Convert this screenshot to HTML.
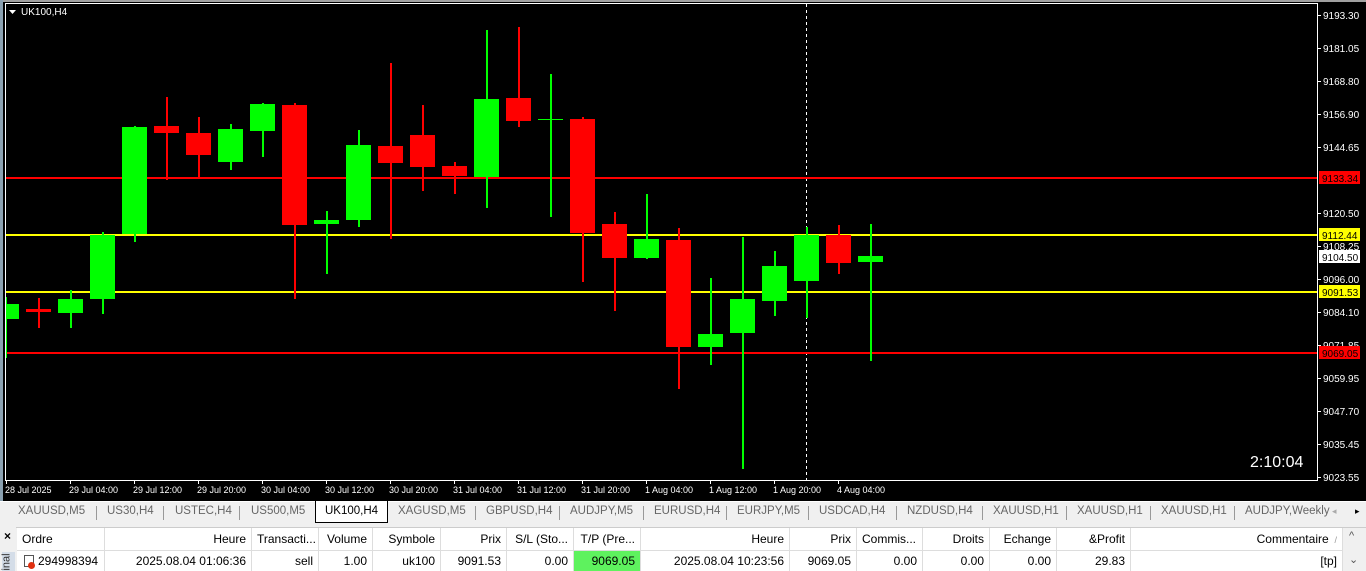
<!DOCTYPE html>
<html><head><meta charset="utf-8"><style>
*{margin:0;padding:0;box-sizing:border-box}
body{width:1366px;height:571px;overflow:hidden;background:#f0f0f0;font-family:"Liberation Sans",sans-serif;position:relative}
.a{position:absolute;white-space:nowrap}
.tab{position:absolute;top:505px;font-size:11.5px;color:#666}
.sep{position:absolute;top:506px;width:1px;height:14px;background:#999}
.h{position:absolute;top:528px;height:22px;font-size:12px;color:#000;line-height:22px;border-right:1px solid #ddd;padding:0 5px;text-align:right;background:#fff}
.r{position:absolute;top:551px;height:20px;font-size:12px;color:#000;line-height:20px;border-right:1px solid #ddd;padding:0 5px;text-align:right;background:#fff}
</style></head><body>
<svg class="a" style="left:0;top:0" width="1366" height="501" xmlns="http://www.w3.org/2000/svg" font-family="Liberation Sans, sans-serif">
<rect width="1366" height="501" fill="#000"/>
<rect x="0" y="0" width="1366" height="2" fill="#a0a0a0"/>
<rect x="0" y="0" width="3" height="501" fill="#8aa0b0"/>
<rect x="5" y="3" width="1313" height="1" fill="#fff"/>
<rect x="5" y="3" width="1" height="478" fill="#fff"/>
<rect x="1317" y="3" width="1" height="478" fill="#fff"/>
<rect x="5" y="480" width="1313" height="1" fill="#fff"/>
<path d="M9 10h7l-3.5 4z" fill="#fff"/>
<text x="21" y="15" font-size="10" fill="#fff">UK100,H4</text>
<line x1="806.5" y1="4" x2="806.5" y2="480" stroke="#fff" stroke-dasharray="3,3"/>
<g fill="#f00"><rect x="6" y="177" width="1311" height="2"/><rect x="6" y="352" width="1311" height="2"/></g>
<g fill="#ff0"><rect x="6" y="234" width="1311" height="2"/><rect x="6" y="291" width="1311" height="2"/></g>
<g font-size="10" fill="#fff">
<text x="1323" y="19">9193.30</text><text x="1323" y="52">9181.05</text><text x="1323" y="85">9168.80</text><text x="1323" y="118">9156.90</text><text x="1323" y="151">9144.65</text><text x="1323" y="217">9120.50</text><text x="1323" y="250">9108.25</text><text x="1323" y="283">9096.00</text><text x="1323" y="316">9084.10</text><text x="1323" y="349">9071.85</text><text x="1323" y="382">9059.95</text><text x="1323" y="415">9047.70</text><text x="1323" y="448">9035.45</text><text x="1323" y="481">9023.55</text>
</g>
<g fill="#fff"><rect x="1318" y="15" width="3" height="1"/><rect x="1318" y="48" width="3" height="1"/><rect x="1318" y="81" width="3" height="1"/><rect x="1318" y="114" width="3" height="1"/><rect x="1318" y="147" width="3" height="1"/><rect x="1318" y="213" width="3" height="1"/><rect x="1318" y="246" width="3" height="1"/><rect x="1318" y="279" width="3" height="1"/><rect x="1318" y="312" width="3" height="1"/><rect x="1318" y="345" width="3" height="1"/><rect x="1318" y="378" width="3" height="1"/><rect x="1318" y="411" width="3" height="1"/><rect x="1318" y="444" width="3" height="1"/><rect x="1318" y="477" width="3" height="1"/></g>
<rect x="1319" y="171" width="41" height="13" fill="#f00"/><text x="1322" y="182" font-size="10" fill="#000">9133.34</text>
<rect x="1319" y="228" width="41" height="13" fill="#ff0"/><text x="1322" y="239" font-size="10" fill="#000">9112.44</text>
<rect x="1319" y="250" width="41" height="13" fill="#fff"/><text x="1322" y="261" font-size="10" fill="#000">9104.50</text>
<rect x="1319" y="285" width="41" height="13" fill="#ff0"/><text x="1322" y="296" font-size="10" fill="#000">9091.53</text>
<rect x="1319" y="346" width="41" height="13" fill="#f00"/><text x="1322" y="357" font-size="10" fill="#000">9069.05</text>
<text x="1250" y="467" font-size="16" fill="#fff">2:10:04</text>
<g font-size="9" fill="#fff">
<text x="5" y="493">28 Jul 2025</text><text x="69" y="493">29 Jul 04:00</text><text x="133" y="493">29 Jul 12:00</text><text x="197" y="493">29 Jul 20:00</text><text x="261" y="493">30 Jul 04:00</text><text x="325" y="493">30 Jul 12:00</text><text x="389" y="493">30 Jul 20:00</text><text x="453" y="493">31 Jul 04:00</text><text x="517" y="493">31 Jul 12:00</text><text x="581" y="493">31 Jul 20:00</text><text x="645" y="493">1 Aug 04:00</text><text x="709" y="493">1 Aug 12:00</text><text x="773" y="493">1 Aug 20:00</text><text x="837" y="493">4 Aug 04:00</text>
</g>
<g fill="#fff"><rect x="6" y="481" width="1" height="3"/><rect x="70" y="481" width="1" height="3"/><rect x="134" y="481" width="1" height="3"/><rect x="198" y="481" width="1" height="3"/><rect x="262" y="481" width="1" height="3"/><rect x="326" y="481" width="1" height="3"/><rect x="390" y="481" width="1" height="3"/><rect x="454" y="481" width="1" height="3"/><rect x="518" y="481" width="1" height="3"/><rect x="582" y="481" width="1" height="3"/><rect x="646" y="481" width="1" height="3"/><rect x="710" y="481" width="1" height="3"/><rect x="774" y="481" width="1" height="3"/><rect x="838" y="481" width="1" height="3"/></g>
<g>
<rect x="6" y="297" width="1" height="61" fill="#0f0"/><rect x="6" y="304" width="13" height="15" fill="#0f0"/>
<rect x="38" y="298" width="2" height="30" fill="#f00"/><rect x="26" y="309" width="25" height="3" fill="#f00"/>
<rect x="70" y="290" width="2" height="38" fill="#0f0"/><rect x="58" y="299" width="25" height="14" fill="#0f0"/>
<rect x="102" y="232" width="2" height="82" fill="#0f0"/><rect x="90" y="235" width="25" height="64" fill="#0f0"/>
<rect x="134" y="126" width="2" height="116" fill="#0f0"/><rect x="122" y="127" width="25" height="107" fill="#0f0"/>
<rect x="166" y="97" width="2" height="83" fill="#f00"/><rect x="154" y="126" width="25" height="7" fill="#f00"/>
<rect x="198" y="117" width="2" height="60" fill="#f00"/><rect x="186" y="133" width="25" height="22" fill="#f00"/>
<rect x="230" y="124" width="2" height="46" fill="#0f0"/><rect x="218" y="129" width="25" height="33" fill="#0f0"/>
<rect x="262" y="103" width="2" height="54" fill="#0f0"/><rect x="250" y="104" width="25" height="27" fill="#0f0"/>
<rect x="294" y="103" width="2" height="196" fill="#f00"/><rect x="282" y="105" width="25" height="120" fill="#f00"/>
<rect x="326" y="211" width="2" height="63" fill="#0f0"/><rect x="314" y="220" width="25" height="4" fill="#0f0"/>
<rect x="358" y="130" width="2" height="97" fill="#0f0"/><rect x="346" y="145" width="25" height="75" fill="#0f0"/>
<rect x="390" y="63" width="2" height="176" fill="#f00"/><rect x="378" y="146" width="25" height="17" fill="#f00"/>
<rect x="422" y="105" width="2" height="86" fill="#f00"/><rect x="410" y="135" width="25" height="32" fill="#f00"/>
<rect x="454" y="162" width="2" height="32" fill="#f00"/><rect x="442" y="166" width="25" height="10" fill="#f00"/>
<rect x="486" y="30" width="2" height="178" fill="#0f0"/><rect x="474" y="99" width="25" height="78" fill="#0f0"/>
<rect x="518" y="27" width="2" height="100" fill="#f00"/><rect x="506" y="98" width="25" height="23" fill="#f00"/>
<rect x="550" y="74" width="2" height="143" fill="#0f0"/><rect x="538" y="119" width="25" height="1" fill="#0f0"/>
<rect x="582" y="117" width="2" height="165" fill="#f00"/><rect x="570" y="119" width="25" height="114" fill="#f00"/>
<rect x="614" y="212" width="2" height="99" fill="#f00"/><rect x="602" y="224" width="25" height="34" fill="#f00"/>
<rect x="646" y="194" width="2" height="65" fill="#0f0"/><rect x="634" y="239" width="25" height="19" fill="#0f0"/>
<rect x="678" y="228" width="2" height="161" fill="#f00"/><rect x="666" y="240" width="25" height="107" fill="#f00"/>
<rect x="710" y="278" width="2" height="87" fill="#0f0"/><rect x="698" y="334" width="25" height="13" fill="#0f0"/>
<rect x="742" y="237" width="2" height="232" fill="#0f0"/><rect x="730" y="299" width="25" height="34" fill="#0f0"/>
<rect x="774" y="251" width="2" height="65" fill="#0f0"/><rect x="762" y="266" width="25" height="35" fill="#0f0"/>
<rect x="806" y="227" width="2" height="91" fill="#0f0"/><rect x="794" y="235" width="25" height="46" fill="#0f0"/>
<rect x="838" y="225" width="2" height="49" fill="#f00"/><rect x="826" y="235" width="25" height="28" fill="#f00"/>
<rect x="870" y="224" width="2" height="137" fill="#0f0"/><rect x="858" y="256" width="25" height="6" fill="#0f0"/>
</g>
</svg>
<div class="a" style="left:0;top:501px;width:1366px;height:1px;background:#fff"></div>
<div class="a" style="left:315px;top:501px;width:73px;height:22px;background:#fff;border:1px solid #000;border-top:none"></div>
<div class="tab" style="left:18px">XAUUSD,M5</div><div class="sep" style="left:96px"></div>
<div class="tab" style="left:107px">US30,H4</div><div class="sep" style="left:163px"></div>
<div class="tab" style="left:175px">USTEC,H4</div><div class="sep" style="left:239px"></div>
<div class="tab" style="left:251px">US500,M5</div>
<div class="tab" style="left:325px;color:#000">UK100,H4</div>
<div class="tab" style="left:398px">XAGUSD,M5</div><div class="sep" style="left:475px"></div>
<div class="tab" style="left:486px">GBPUSD,H4</div><div class="sep" style="left:559px"></div>
<div class="tab" style="left:570px">AUDJPY,M5</div><div class="sep" style="left:643px"></div>
<div class="tab" style="left:654px">EURUSD,H4</div><div class="sep" style="left:726px"></div>
<div class="tab" style="left:737px">EURJPY,M5</div><div class="sep" style="left:808px"></div>
<div class="tab" style="left:819px">USDCAD,H4</div><div class="sep" style="left:896px"></div>
<div class="tab" style="left:907px">NZDUSD,H4</div><div class="sep" style="left:982px"></div>
<div class="tab" style="left:993px">XAUUSD,H1</div><div class="sep" style="left:1066px"></div>
<div class="tab" style="left:1077px">XAUUSD,H1</div><div class="sep" style="left:1150px"></div>
<div class="tab" style="left:1161px">XAUUSD,H1</div><div class="sep" style="left:1234px"></div>
<div class="tab" style="left:1245px">AUDJPY,Weekly</div>
<div class="a" style="left:1332px;top:506px;font-size:9px;color:#aaa">◂</div>
<div class="a" style="left:1355px;top:506px;font-size:9px;color:#000">▸</div>
<div class="a" style="left:0;top:524px;width:1366px;height:47px;background:#f0f0f0"></div>
<div class="a" style="left:4px;top:529px;font-size:12px;font-weight:bold">×</div>
<div class="a" style="left:2px;top:552px;width:13px;height:19px;background:#d4dde8"></div>
<div class="a" style="left:-2px;top:556px;font-size:11px;color:#333;transform:rotate(-90deg);transform-origin:center">inal</div>
<div class="a" style="left:16px;top:527px;width:1350px;height:1px;background:#ccc"></div>
<div class="h" style="left:17px;width:88px;text-align:left">Ordre</div>
<div class="h" style="left:105px;width:147px">Heure</div>
<div class="h" style="left:252px;width:67px">Transacti...</div>
<div class="h" style="left:319px;width:54px">Volume</div>
<div class="h" style="left:373px;width:68px">Symbole</div>
<div class="h" style="left:441px;width:66px">Prix</div>
<div class="h" style="left:507px;width:67px">S/L (Sto...</div>
<div class="h" style="left:574px;width:67px">T/P (Pre...</div>
<div class="h" style="left:641px;width:149px">Heure</div>
<div class="h" style="left:790px;width:67px">Prix</div>
<div class="h" style="left:857px;width:66px;text-align:left">Commis...</div>
<div class="h" style="left:923px;width:67px">Droits</div>
<div class="h" style="left:990px;width:67px">Echange</div>
<div class="h" style="left:1057px;width:74px">&amp;Profit</div>
<div class="h" style="left:1131px;width:212px">Commentaire <span style="color:#999;font-size:9px">&nbsp;/</span></div>
<div class="a" style="left:17px;top:550px;width:1326px;height:1px;background:#ddd"></div>
<div class="r" style="left:17px;width:88px;text-align:left"><span style="display:inline-block;width:10px;height:12px;border:1px solid #555;vertical-align:-2px;margin:0 4px 0 2px;position:relative"><span style="position:absolute;left:3px;top:6px;width:7px;height:7px;border-radius:50%;background:#e03010"></span></span>294998394</div>
<div class="r" style="left:105px;width:147px">2025.08.04 01:06:36</div>
<div class="r" style="left:252px;width:67px">sell</div>
<div class="r" style="left:319px;width:54px">1.00</div>
<div class="r" style="left:373px;width:68px">uk100</div>
<div class="r" style="left:441px;width:66px">9091.53</div>
<div class="r" style="left:507px;width:67px">0.00</div>
<div class="r" style="left:574px;width:67px;background:#5ef25e">9069.05</div>
<div class="r" style="left:641px;width:149px">2025.08.04 10:23:56</div>
<div class="r" style="left:790px;width:67px">9069.05</div>
<div class="r" style="left:857px;width:66px">0.00</div>
<div class="r" style="left:923px;width:67px">0.00</div>
<div class="r" style="left:990px;width:67px">0.00</div>
<div class="r" style="left:1057px;width:74px">29.83</div>
<div class="r" style="left:1131px;width:212px">[tp]</div>
<div class="a" style="left:1343px;top:528px;width:23px;height:43px;background:#f0f0f0"></div>
<div class="a" style="left:1349px;top:530px;font-size:11px;color:#555">^</div>
<div class="a" style="left:1349px;top:553px;font-size:11px;color:#555">⌄</div>
</body></html>
